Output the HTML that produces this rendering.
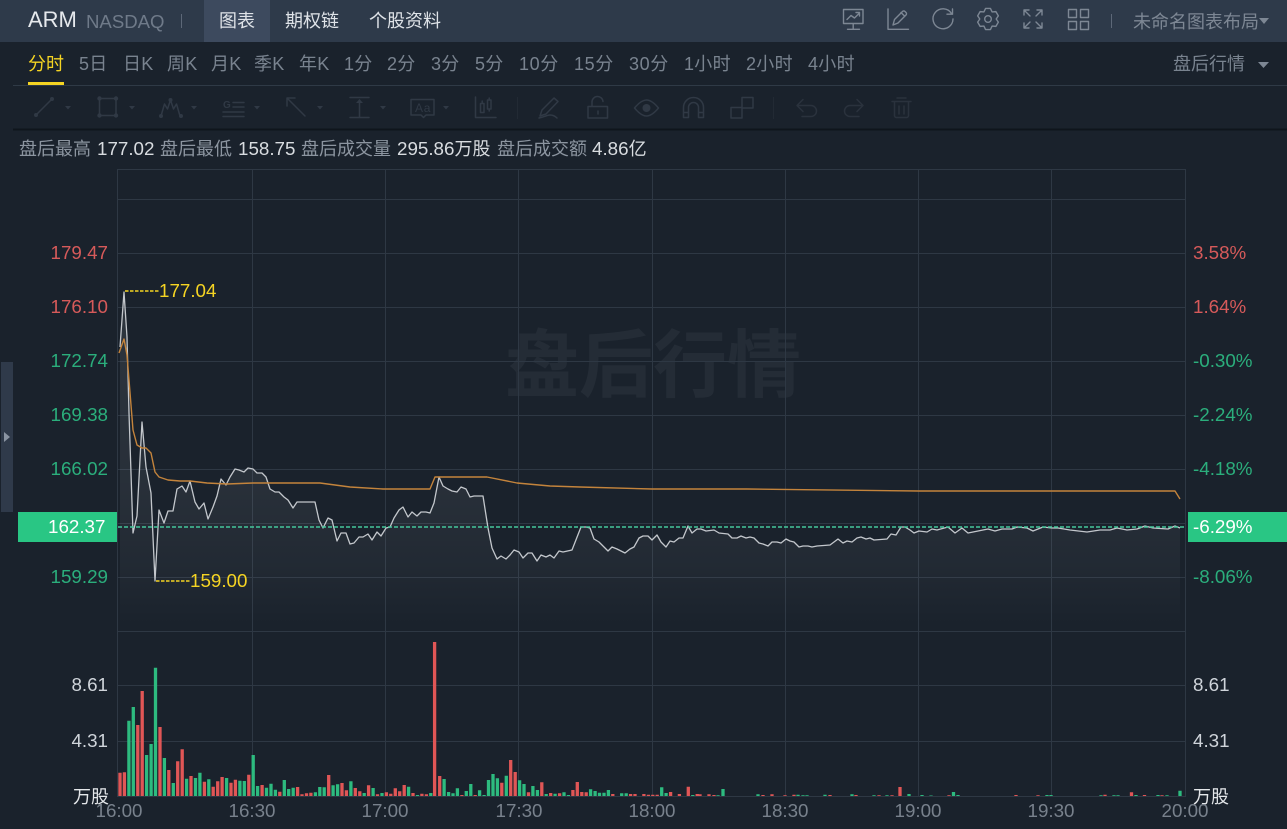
<!DOCTYPE html>
<html lang="zh"><head><meta charset="utf-8"><title>ARM</title>
<style>
html,body{margin:0;padding:0;background:#1a222c;width:1287px;height:829px;overflow:hidden}
body{position:relative;font-family:"Liberation Sans","Noto Sans CJK SC",sans-serif;font-size:18px}
.t{position:absolute;white-space:nowrap;line-height:24px;height:24px}
.top{position:absolute;left:0;top:0;width:1287px;height:42px;background:#2e3a4a}
.act{position:absolute;left:204px;top:0;width:66px;height:42px;background:#3d4a5e}
.p{color:#79838f;top:52px}
.wd{letter-spacing:.6px}
.wh{letter-spacing:.3px}
.g{color:#8c95a0;top:137px}
.w{color:#d8dce0;top:137px}
.n{font-size:18.8px}
.l{right:1179px}
.r{left:1193px}
.red{color:#d65a5a}.grn{color:#2bae7c}
.v{color:#cfd4da}
.x{color:#78818c;top:799px;width:60px;text-align:center}
svg{position:absolute;left:0;top:0}
</style></head><body>
<div class="top"></div><div class="act"></div>
<div class="t" style="left:28px;top:8px;font-size:22px;color:#e6e9ed">ARM</div>
<div class="t" style="left:86px;top:10px;font-size:18.6px;color:#6f7a89">NASDAQ</div>
<div class="t" style="left:219px;top:9px;color:#dfe3e8">图表</div>
<div class="t" style="left:285px;top:9px;color:#dfe3e8">期权链</div>
<div class="t" style="left:369px;top:9px;color:#dfe3e8">个股资料</div>
<div class="t" style="left:1133px;top:10px;color:#7d8794">未命名图表布局</div>

<div class="t p" style="left:28px;color:#f5d423">分时</div>
<div class="t p wh" style="left:79px">5日</div>
<div class="t p wh" style="left:123px">日K</div>
<div class="t p wh" style="left:167px">周K</div>
<div class="t p wh" style="left:211px">月K</div>
<div class="t p wh" style="left:254px">季K</div>
<div class="t p wh" style="left:299px">年K</div>
<div class="t p wh" style="left:344px">1分</div>
<div class="t p wh" style="left:387px">2分</div>
<div class="t p wh" style="left:431px">3分</div>
<div class="t p wh" style="left:475px">5分</div>
<div class="t p wd" style="left:519px">10分</div>
<div class="t p wd" style="left:574px">15分</div>
<div class="t p wd" style="left:629px">30分</div>
<div class="t p wh" style="left:684px">1小时</div>
<div class="t p wh" style="left:746px">2小时</div>
<div class="t p wh" style="left:808px">4小时</div>
<div class="t p" style="left:1173px">盘后行情</div>

<div class="t g" style="left:19px">盘后最高</div><div class="t w n" style="left:97px">177.02</div>
<div class="t g" style="left:160px">盘后最低</div><div class="t w n" style="left:238px">158.75</div>
<div class="t g" style="left:301px">盘后成交量</div><div class="t w" style="left:397px"><span class="n">295.86</span>万股</div>
<div class="t g" style="left:497px">盘后成交额</div><div class="t w" style="left:592px"><span class="n">4.86</span>亿</div>

<div class="t" style="left:505px;top:322px;height:88px;line-height:88px;font-size:74px;font-weight:bold;color:#242c36">盘后行情</div>

<svg width="1287" height="829" viewBox="0 0 1287 829">
<defs><linearGradient id="a" gradientUnits="userSpaceOnUse" x1="0" y1="292" x2="0" y2="625"><stop offset="0" stop-color="#fff" stop-opacity=".085"/><stop offset=".6" stop-color="#fff" stop-opacity=".06"/><stop offset=".82" stop-color="#fff" stop-opacity=".035"/><stop offset="1" stop-color="#fff" stop-opacity="0"/></linearGradient></defs>
<!-- chrome lines -->
<path d="M13 85.5H1287" stroke="#2f3a46"/>
<path d="M13 129.5H1287" stroke="#0f151c" stroke-width="2"/>
<path d="M28 83.5H64" stroke="#f5d423" stroke-width="3"/>
<path d="M181.5 14V28M1111.5 14V28" stroke="#5d6878"/>
<path d="M1259 18h10l-5 6zM1258 62h11l-5.500 6z" fill="#7d8794"/>
<!-- side handle -->
<rect x="1" y="362" width="12" height="150" fill="#2f3a4a"/>
<path d="M4 432l6 5-6 5z" fill="#8a94a2"/>
<!-- grid -->
<path d="M117 169.5H1185M117 199.5H1185M117 253.5H1185M117 307.5H1185M117 361.5H1185M117 415.5H1185M117 469.5H1185M117 523.5H1185M117 577.5H1185M117 631.5H1185M117 685.5H1185M117 741.5H1185M117 796.5H1185M117.5 169V797M252.5 169V797M385.5 169V797M518.5 169V797M652.5 169V797M785.5 169V797M918.5 169V797M1051.5 169V797M1185.5 169V797" stroke="#2e3844" fill="none"/>
<!-- area -->
<polygon fill="url(#a)" points="120,347 124,292 127,337 129,413 133,533 137,516 142,422 146,467 151,493 155,581 159,510 164,523 168,511 173,511 177,489 182,486 186,492 190,481 195,502 199,509 204,503 208,519 213,507 217,496 221,479 226,485 230,477 235,469 239,470 244,472 248,468 253,469 257,473 262,473 266,477 270,489 275,492 279,492 284,497 288,500 293,508 297,502 315,502 319,520 323,528 328,518 332,520 337,541 341,533 346,533 350,544 354,543 359,537 363,537 368,534 372,540 377,532 381,536 386,528 390,527 394,518 399,510 403,507 408,517 412,512 417,516 421,512 426,512 430,513 434,503 439,477 443,486 448,489 452,491 457,492 461,487 466,489 470,497 474,496 483,496 488,528 492,548 497,559 501,556 506,559 510,555 514,550 519,552 523,558 528,553 532,553 537,561 541,555 546,557 550,555 554,558 559,551 563,552 572,550 581,527 586,527 590,528 594,539 599,542 608,551 612,547 617,549 625,553 630,549 634,547 639,538 643,536 648,536 652,540 657,535 661,542 666,547 670,541 674,542 679,538 683,538 688,526 692,533 697,529 701,529 706,531 714,530 719,533 728,534 732,538 737,538 741,536 746,538 750,537 754,538 759,543 763,544 768,546 772,542 777,542 781,543 786,539 790,541 794,542 799,547 803,546 808,546 812,547 817,546 830,545 838,539 843,543 847,541 852,542 857,538 861,537 866,539 870,538 874,540 887,539 891,534 896,535 901,527 905,527 910,530 914,533 919,531 927,532 932,529 937,530 948,527 955,533 962,528 968,533 978,531 988,529 995,531 1002,529 1012,529 1017,527 1027,528 1033,531 1043,527 1052,528 1058,528 1070,530 1087,532 1100,530 1110,530 1117,528 1127,530 1137,529 1145,526 1153,528 1168,529 1175,526 1180,528 1180,625 120,625"/>
<!-- price -->
<polyline fill="none" stroke="#c3c7cc" stroke-width="1.300" stroke-linejoin="round" points="120,347 124,292 127,337 129,413 133,533 137,516 142,422 146,467 151,493 155,581 159,510 164,523 168,511 173,511 177,489 182,486 186,492 190,481 195,502 199,509 204,503 208,519 213,507 217,496 221,479 226,485 230,477 235,469 239,470 244,472 248,468 253,469 257,473 262,473 266,477 270,489 275,492 279,492 284,497 288,500 293,508 297,502 315,502 319,520 323,528 328,518 332,520 337,541 341,533 346,533 350,544 354,543 359,537 363,537 368,534 372,540 377,532 381,536 386,528 390,527 394,518 399,510 403,507 408,517 412,512 417,516 421,512 426,512 430,513 434,503 439,477 443,486 448,489 452,491 457,492 461,487 466,489 470,497 474,496 483,496 488,528 492,548 497,559 501,556 506,559 510,555 514,550 519,552 523,558 528,553 532,553 537,561 541,555 546,557 550,555 554,558 559,551 563,552 572,550 581,527 586,527 590,528 594,539 599,542 608,551 612,547 617,549 625,553 630,549 634,547 639,538 643,536 648,536 652,540 657,535 661,542 666,547 670,541 674,542 679,538 683,538 688,526 692,533 697,529 701,529 706,531 714,530 719,533 728,534 732,538 737,538 741,536 746,538 750,537 754,538 759,543 763,544 768,546 772,542 777,542 781,543 786,539 790,541 794,542 799,547 803,546 808,546 812,547 817,546 830,545 838,539 843,543 847,541 852,542 857,538 861,537 866,539 870,538 874,540 887,539 891,534 896,535 901,527 905,527 910,530 914,533 919,531 927,532 932,529 937,530 948,527 955,533 962,528 968,533 978,531 988,529 995,531 1002,529 1012,529 1017,527 1027,528 1033,531 1043,527 1052,528 1058,528 1070,530 1087,532 1100,530 1110,530 1117,528 1127,530 1137,529 1145,526 1153,528 1168,529 1175,526 1180,528"/>
<!-- prev close -->
<path d="M118 527H1185" stroke="#45c79b" stroke-width="1.500" stroke-dasharray="4 2" fill="none"/>
<!-- avg -->
<polyline fill="none" stroke="#c4843c" stroke-width="1.400" stroke-linejoin="round" points="119,353 124,339 127,355 133,430 137,445 142,448 146,448 151,453 155,472 159,477 168,480 180,481 190,481 207,483 227,484 253,483 320,483 350,487 383,489 430,489 435,477 487,477 517,483 550,486 580,487 652,489 747,489 919,491 1175,491 1180,499"/>
<!-- hi/lo -->
<path d="M125 291H159M156 581H190" stroke="#f5d423" stroke-width="1.400" stroke-dasharray="3.500 1.500" fill="none"/>
<!-- volume red -->
<path stroke="#e05656" stroke-width="3.300" fill="none" d="M120 796V772.7M124.4 796V772.3M137.8 796V725M142.2 796V691M160 796V727M168.8 796V770M177.7 796V761.3M182.2 796V749.3M191 796V776M204.4 796V781.7M213.2 796V786.7M217.7 796V781.3M222.1 796V777M231 796V782.7M235.4 796V779.7M248.8 796V774.7M262.1 796V785M279.8 796V791.7M297.6 796V787M302 796V794.3M306.5 796V793.3M310.9 796V792.7M328.7 796V775M342 796V783M346.4 796V790.3M355.3 796V788M359.8 796V791.3M368.6 796V785.3M377.5 796V794.3M386.4 796V792.3M390.8 796V793.7M395.3 796V788.3M399.7 796V791.3M404.2 796V785M413 796V793M421.9 796V793.7M426.4 796V794.3M434.6 796V642M439.7 796V776M461.9 796V795M475.2 796V795M501.8 796V782.7M510.7 796V760M515.2 796V772M528.5 796V792.3M541.8 796V782.3M550.7 796V793M559.6 796V793.3M572.9 796V790M577.3 796V782M581.8 796V792M586.2 796V792.3M612.8 796V794M630.6 796V794M635 796V794M643.9 796V794M648.4 796V794.7M652.8 796V794.7M657.2 796V794.7M670.6 796V792M679.4 796V794M688.3 796V786.7M697.2 796V794M700 796V794.3M709 796V794.3M714 796V795M763 796V795M772 796V794.3M785 796V795.3M794 796V794.7M830 796V795M856 796V795M879 796V795.3M892 796V795.3M900 796V787M949 796V795.3M1016 796V795M1038 796V795.3M1105 796V794.7M1131.5 796V792.3M1144.5 796V795M1162 796V795.3"/>
<!-- volume green -->
<path stroke="#2dbb7f" stroke-width="3.300" fill="none" d="M128.9 796V720.7M133.3 796V707M146.6 796V755M151.1 796V744M155.5 796V667.7M164.4 796V758M173.3 796V783M186.6 796V778.7M195.5 796V778M199.9 796V772.7M208.8 796V779.3M226.6 796V778M239.9 796V780.7M244.3 796V781M253.2 796V755M257.6 796V786M266.5 796V787.7M271 796V783.7M275.4 796V789.7M284.3 796V780M288.7 796V789M293.2 796V787.7M315.4 796V792.3M319.8 796V787M324.2 796V787.3M333.1 796V785.3M337.6 796V784.3M350.9 796V781.3M364.2 796V793M373.1 796V788M382 796V793M408.6 796V786.7M417.5 796V795M430.8 796V793M444.1 796V779M448.6 796V792M453 796V793.3M457.4 796V788.3M466.3 796V791M470.8 796V784M479.6 796V790.3M484.1 796V795M488.5 796V780M493 796V774M497.4 796V778.3M506.3 796V775.7M519.6 796V780.3M524 796V784M532.9 796V786M537.4 796V790M546.2 796V794M555.1 796V793.7M564 796V792.3M568.4 796V795M590.6 796V789.3M595.1 796V791M599.5 796V792.7M604 796V792.7M608.4 796V790M621.7 796V793.3M626.2 796V793.3M661.7 796V787.3M666.1 796V793M692.8 796V795M718 796V795.3M723 796V789M758 796V794.3M798 796V794.7M803 796V795.3M807 796V795.3M825 796V794.7M852 796V794.3M874 796V795.3M887 796V795.3M909 796V794M922 796V795M931 796V795.5M953.5 796V792M958 796V795M1047 796V795M1051 796V795M1101 796V795.3M1114 796V795.3M1118 796V795.3M1136 796V795M1158 796V795M1167 796V795.3M1180 796V790.7"/>
<!-- badges -->
<rect x="18" y="512" width="99" height="30" fill="#29c684"/>
<rect x="1188" y="512" width="99" height="30" fill="#29c684"/>

<!-- top icons -->
<g fill="none" stroke="#7d8794" stroke-width="1.400" stroke-linecap="round" stroke-linejoin="round">
<path d="M843.5 9.5H863V23.500H843.5ZM853.2 23.500V29M847.500 29.300H859.500M847 19.500l4-4 3.500 2.500 5-5M856 12.500h3.500V16"/>
<path d="M888 9V29.300H908.500M893 25l1.500-5.500 8-8a1.800 1.800 0 0 1 2.500 0l1 1a1.800 1.800 0 0 1 0 2.500l-8 8zM901 12.500l3.500 3.500"/>
<path d="M951.500 13.500A10 10 0 1 0 953 19M952.500 9V14.200H947"/>
<path d="M985.57 8.48L990.43 8.48L992.1 11.9L995.9 11.63L998.33 15.84L996.2 19L998.33 22.16L995.9 26.37L992.1 26.1L990.43 29.52L985.57 29.52L983.9 26.1L980.1 26.37L977.67 22.16L979.8 19L977.67 15.84L980.1 11.63L983.9 11.9Z"/>
<circle cx="988" cy="19" r="3.300"/>
<path d="M1024 10l6 6M1024 10h5M1024 10v5M1042 10l-6 6M1042 10h-5M1042 10v5M1024 28l6-6M1024 28h5M1024 28v-5M1042 28l-6-6M1042 28h-5M1042 28v-5"/>
<path d="M1068.5 9.500h8v8h-8zM1080.500 9.500h8v8h-8zM1068.500 21.500h8v8h-8zM1080.500 21.500h8v8h-8z"/>
</g>
<!-- toolbar icons -->
<g fill="none" stroke="#303945" stroke-width="1.500" stroke-linecap="round" stroke-linejoin="round">
<path d="M36 115L52 99"/>
<path d="M99.500 98.500H116V115.500H99.500Z"/>
<path d="M161 116l3.500-12 3 5 3-9 3 9 3-5 3.500 12"/>
<path d="M233 102.500h11M233 107h11M223 112h21M223 116.500h21"/>
<path d="M287 98l18 18M287 98h8M287 98v8"/>
<path d="M350 97.500h19M350 117.500h19M359.500 100v17"/>
<path d="M411 99.500h23V115h-8l-2.500 2.500L421 115h-10z"/>
<path d="M475.500 97v20.500H496"/>
<path d="M480.500 103.500h3.500v9h-3.500zM487.500 100h3.500v9h-3.500zM482.200 101v2M489.200 98v2M489.200 109v2"/>
<path d="M540 116l2-6 12-12 4 3.500-12 12.500zM539 118c5-1 8-3 11-3s5 1 7 3"/>
<path d="M588 106.500h19.500V118h-19.500zM592 106.500v-4a5.500 5.500 0 0 1 11-1M598 111v3"/>
<path d="M634.500 108c5-6 8.500-8 12-8s7 2 12 8c-5 6-8.500 8-12 8s-7-2-12-8z"/>
<path d="M683.500 117.500v-10a10 10 0 0 1 20 0v10h-5v-10a5 5 0 0 0-10 0v10zM683.500 112.500h5M698.500 112.500h5"/>
<path d="M731 107.500h11v10.500h-11zM742 97.500h11V108h-11z"/>
</g>
<path d="M517.500 97v22M773.500 97v22" stroke="#222a34" fill="none"/>
<g fill="none" stroke="#2a323d" stroke-width="1.500" stroke-linecap="round" stroke-linejoin="round">
<path d="M798 105.500h13a5.500 5.500 0 0 1 0 11h-9M803 99.500l-6 6 6 6"/>
<path d="M863 105.500h-13a5.500 5.500 0 0 0 0 11h9M857 99.500l6 6-6 6"/>
<path d="M892 101.500h19M897 98h9M894.500 102v13.500a2 2 0 0 0 2 2h10a2 2 0 0 0 2-2V102M899 106v8M904 106v8"/>
</g>
<g fill="#303945">
<circle cx="36" cy="115" r="2"/><circle cx="52" cy="99" r="2"/>
<circle cx="99.5" cy="98.5" r="2.200"/><circle cx="116" cy="98.5" r="2.200"/><circle cx="99.5" cy="115.5" r="2.200"/><circle cx="116" cy="115.5" r="2.200"/>
<circle cx="161" cy="116" r="2"/><circle cx="170.5" cy="100" r="2"/><circle cx="181" cy="116" r="2"/>
<circle cx="646.5" cy="108" r="4"/>
<path d="M65 106h6l-3 3.500zM129 106h6l-3 3.500zM191 106h6l-3 3.500zM254 106h6l-3 3.500zM317 106h6l-3 3.500zM380 106h6l-3 3.500zM443 106h6l-3 3.500z"/>
<path d="M359.5 99l3.500 4h-7z"/>
</g>
<text x="415" y="112" font-family="Liberation Sans" font-size="12" fill="#303945" letter-spacing=".8">Aa</text>
<text x="223" y="108" font-family="Liberation Sans" font-size="10" font-weight="bold" fill="#303945">G</text>
</svg>

<div class="t n l red" style="top:241px">179.47</div>
<div class="t n l red" style="top:295px">176.10</div>
<div class="t n l grn" style="top:349px">172.74</div>
<div class="t n l grn" style="top:403px">169.38</div>
<div class="t n l grn" style="top:457px">166.02</div>
<div class="t n" style="left:48px;top:515px;color:#fff">162.37</div>
<div class="t n l grn" style="top:565px">159.29</div>
<div class="t n r red" style="top:241px">3.58%</div>
<div class="t n r red" style="top:295px">1.64%</div>
<div class="t n r grn" style="top:349px">-0.30%</div>
<div class="t n r grn" style="top:403px">-2.24%</div>
<div class="t n r grn" style="top:457px">-4.18%</div>
<div class="t n r" style="top:515px;color:#fff">-6.29%</div>
<div class="t n r grn" style="top:565px">-8.06%</div>
<div class="t n" style="left:159px;top:279px;color:#f5d423">177.04</div>
<div class="t n" style="left:190px;top:569px;color:#f5d423">159.00</div>
<div class="t n l v" style="top:673px">8.61</div>
<div class="t n l v" style="top:729px">4.31</div>
<div class="t" style="left:73px;top:785px;color:#e4e7ea">万股</div>
<div class="t n r v" style="top:673px">8.61</div>
<div class="t n r v" style="top:729px">4.31</div>
<div class="t r" style="top:785px;color:#e4e7ea">万股</div>
<div class="t n x" style="left:89px">16:00</div>
<div class="t n x" style="left:222px">16:30</div>
<div class="t n x" style="left:355px">17:00</div>
<div class="t n x" style="left:489px">17:30</div>
<div class="t n x" style="left:622px">18:00</div>
<div class="t n x" style="left:755px">18:30</div>
<div class="t n x" style="left:888px">19:00</div>
<div class="t n x" style="left:1021px">19:30</div>
<div class="t n x" style="left:1155px">20:00</div>
</body></html>
